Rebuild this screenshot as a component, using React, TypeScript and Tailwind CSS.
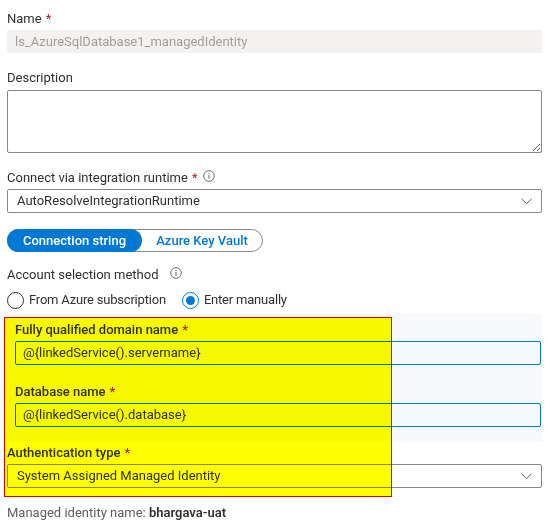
import React from "react";

const font = { fontFamily: '"Segoe UI", Roboto, "Noto Sans", sans-serif' };

function Req() {
    return <span className="text-[#a4262c] ml-[4px]">*</span>;
}

function Info() {
    return (
        <svg width="12" height="12" viewBox="0 0 12 12" className="inline-block">
            <circle cx="6" cy="6" r="5.3" fill="none" stroke="#605e5c" strokeWidth="0.9" />
            <line x1="6" y1="5" x2="6" y2="8.6" stroke="#605e5c" strokeWidth="1" />
            <circle cx="6" cy="3.4" r="0.6" fill="#605e5c" />
        </svg>
    );
}

function Chevron() {
    return (
        <svg width="11" height="7" viewBox="0 0 11 7">
            <polyline points="0.5,0.8 5.5,5.6 10.5,0.8" fill="none" stroke="#605e5c" strokeWidth="1" />
        </svg>
    );
}

function Dropdown({ value }: { value: string }) {
    return (
        <div className="h-[24px] border border-[#8a8886] rounded-[2px] bg-white flex items-center pl-[9px] pr-[9px]">
            <span className="flex-1 text-[13px] text-[#323130]">{value}</span>
            <Chevron />
        </div>
    );
}

function Radio({ checked, label }: { checked?: boolean; label: string }) {
    return (
        <div className="flex items-center gap-[5px]">
            <span
                className={`w-[17px] h-[17px] rounded-full border flex items-center justify-center ${checked ? "border-[#0078d4]" : "border-[#323130]"}`}
            >
                {checked && <span className="w-[9px] h-[9px] rounded-full bg-[#0078d4]" />}
            </span>
            <span className="text-[13px] tracking-[-0.2px] text-[#323130]">{label}</span>
        </div>
    );
}

export default function App() {
    return (
        <div className="relative w-[559px] h-[524px] bg-white overflow-hidden text-[#323130]" style={font}>
            <div className="pl-[7px] pr-[17px] pt-[9px]">
                {/* Name */}
                <div className="h-[20px] leading-[20px] text-[13px]">
                    Name<Req />
                </div>
                <div className="mt-[1px] h-[23px] bg-[#f3f2f1] rounded-[2px] flex items-center pl-[8px] text-[13px] text-[#a19f9d]">
                    ls_AzureSqlDatabase1_managedIdentity
                </div>

                {/* Description */}
                <div className="mt-[15px] h-[20px] leading-[20px] text-[13px]">Description</div>
                <textarea className="mt-[2px] block w-full h-[63px] border border-[#8a8886] rounded-[2px] bg-white outline-none" />

                {/* Integration runtime */}
                <div className="mt-[15px] h-[20px] leading-[20px] text-[13px] flex items-center">
                    Connect via integration runtime<Req />
                    <span className="ml-[6px] -mt-[5px] flex">
                        <Info />
                    </span>
                </div>
                <div className="mt-[1px]">
                    <Dropdown value="AutoResolveIntegrationRuntime" />
                </div>

                {/* Toggle */}
                <div className="mt-[16px] w-[256px] h-[23px] border border-[#8a8886] rounded-full flex items-center text-[13px] font-medium">
                    <div className="-ml-px w-[135px] h-[23px] rounded-full bg-[#0078d4] text-white flex items-center justify-center">
                        Connection string
                    </div>
                    <div className="flex-1 text-center text-[#0078d4]">Azure Key Vault</div>
                </div>

                {/* Account selection */}
                <div className="mt-[13px] h-[20px] leading-[20px] text-[13px] flex items-center">
                    Account selection method
                    <span className="ml-[12px] -mt-[4px] flex">
                        <Info />
                    </span>
                </div>
                <div className="mt-[5px] h-[20px] flex items-center gap-[16px]">
                    <Radio label="From Azure subscription" />
                    <Radio checked label="Enter manually" />
                </div>

                {/* Manual section */}
                <div className="mt-[4px] bg-[#f7f8fa] pl-[8px] pr-[1px] pt-[6px] pb-[14px]">
                    <div className="h-[20px] leading-[20px] text-[13px] font-medium">
                        Fully qualified domain name<Req />
                    </div>
                    <div className="mt-[1px] h-[24px] border border-[#0078d4] rounded-[2px] bg-[#f4f9fe] flex items-center pl-[7px] text-[13px]">
                        @{"{"}linkedService().servername{"}"}
                    </div>
                    <div className="mt-[17px] h-[20px] leading-[20px] text-[13px] font-medium">
                        Database name<Req />
                    </div>
                    <div className="mt-[1px] h-[24px] border border-[#0078d4] rounded-[2px] bg-[#f4f9fe] flex items-center pl-[7px] text-[13px]">
                        @{"{"}linkedService().database{"}"}
                    </div>
                </div>

                {/* Authentication */}
                <div className="mt-[2px] h-[20px] leading-[20px] text-[13px] font-medium">
                    Authentication type<Req />
                </div>
                <div className="mt-[1px]">
                    <Dropdown value="System Assigned Managed Identity" />
                </div>

                <div className="mt-[15px] h-[20px] leading-[20px] text-[13px] text-[#605e5c]">
                    Managed identity name: <span className="font-semibold text-[#323130]">bhargava-uat</span>
                </div>
            </div>

            {/* highlight annotation */}
            <div className="absolute left-[4px] top-[317px] w-[388px] h-[180px] bg-[#ffff00] mix-blend-multiply pointer-events-none" />
            <div className="absolute left-[4px] top-[317px] w-[388px] h-[180px] border border-[#e00000] pointer-events-none" />
        </div>
    );
}
